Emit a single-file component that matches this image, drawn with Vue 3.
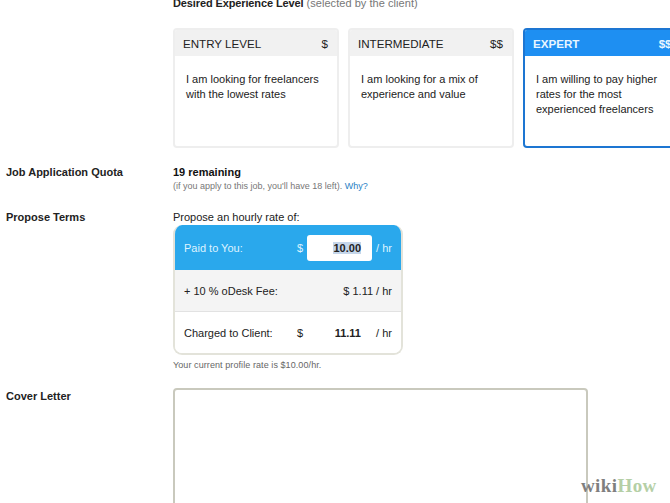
<script setup>
const levels = [
  { title: 'ENTRY LEVEL', price: '$', text: 'I am looking for freelancers with the lowest rates' },
  { title: 'INTERMEDIATE', price: '$$', text: 'I am looking for a mix of experience and value' },
  { title: 'EXPERT', price: '$$$', text: 'I am willing to pay higher rates for the most experienced freelancers', active: true }
]
</script>

<template>
  <div class="page">
    <section class="top">
      <h2 class="desired"><b>Desired Experience Level</b> <span>(selected by the client)</span></h2>
      <div class="cards">
        <article v-for="l in levels" :key="l.title" class="card" :class="{ active: l.active }">
          <header><span>{{ l.title }}</span><span class="price">{{ l.price }}</span></header>
          <p>{{ l.text }}</p>
        </article>
      </div>
    </section>

    <section class="row quota">
      <div class="label">Job Application Quota</div>
      <div>
        <div class="remaining">19 remaining</div>
        <div class="hint">(if you apply to this job, you'll have 18 left). <a>Why?</a></div>
      </div>
    </section>

    <section class="row terms">
      <div class="label">Propose Terms</div>
      <div>
        <div class="propose">Propose an hourly rate of:</div>
        <div class="rate">
          <div class="line paid">
            <span class="name">Paid to You:</span>
            <span class="cur">$</span>
            <span class="input"><mark>10.00</mark></span>
            <span class="hr">/ hr</span>
          </div>
          <div class="line fee">
            <span class="name">+ 10 % oDesk Fee:</span>
            <span class="feeval">$ 1.11 / hr</span>
          </div>
          <div class="line charged">
            <span class="name">Charged to Client:</span>
            <span class="cur">$</span>
            <b class="amount">11.11</b>
            <span class="hr">/ hr</span>
          </div>
        </div>
        <div class="hint profile">Your current profile rate is $10.00/hr.</div>
      </div>
    </section>

    <section class="row cover">
      <div class="label cover-label">Cover Letter</div>
      <div class="letter"></div>
    </section>

    <div class="wm"><span class="wiki">wiki</span><span class="how">How</span></div>
  </div>
</template>

<style>
html, body { margin: 0; background: #fff; overflow: hidden; }
</style>

<style scoped>
.page {
  position: relative;
  width: 670px;
  height: 503px;
  overflow: hidden;
  background: #fff;
  color: #111;
  font-family: "Liberation Sans", Arial, sans-serif;
  font-size: 11px;
}
.top { padding-left: 173px; }
.desired {
  margin: -3px 0 0;
  height: 12px;
  line-height: 12px;
  font-size: 11px;
  font-weight: normal;
  white-space: nowrap;
}
.desired b { color: #222; letter-spacing: -0.12px; }
.desired span { color: #777; letter-spacing: 0.05px; }
.cards { display: flex; gap: 9px; margin-top: 19px; width: 520px; }
.card {
  flex: 0 0 166px;
  box-sizing: border-box;
  height: 120px;
  border: 2px solid #eeeeee;
  border-radius: 4px;
  background: #fff;
  overflow: hidden;
}
.card header {
  display: flex;
  justify-content: space-between;
  align-items: center;
  box-sizing: border-box;
  height: 26px;
  padding: 1px 9px 0 8px;
  background: #f1f1f1;
  font-size: 11.6px;
  color: #222;
}
.card p {
  margin: 0;
  padding: 16px 10px 0 11px;
  line-height: 15px;
  font-size: 11px;
  color: #222;
}
.card.active { border-color: #1d76d2; }
.card.active header { background: #1e8ff2; color: #e8f6ff; font-weight: bold; }
.row { display: flex; padding-left: 6px; }
.label { flex: 0 0 167px; font-weight: bold; color: #222; line-height: 12px; }
.cover-label { padding-top: 2px; }
.quota { margin-top: 18px; }
.remaining { font-weight: bold; line-height: 12px; color: #111; }
.hint { font-size: 9px; line-height: 11px; color: #777; margin-top: 3px; white-space: nowrap; }
.hint a { color: #1f7fc4; }
.terms { margin-top: 19px; }
.propose { font-size: 11px; line-height: 12px; color: #222; }
.rate {
  box-sizing: border-box;
  width: 230px;
  margin-top: 2px;
  border: 2px solid #e3e3da;
  border-top: 0;
  border-radius: 9px;
  overflow: hidden;
}
.line {
  display: flex;
  align-items: center;
  padding: 0 9px;
  font-size: 11px;
  color: #222;
}
.name { flex: 1; }
.paid {
  height: 45px;
  margin: 0 -2px;
  padding: 0 11px;
  background: #2aa8ec;
  color: #def3ff;
}
.cur { width: 10px; }
.input {
  box-sizing: border-box;
  width: 65px;
  height: 26px;
  padding-right: 11px;
  background: #fff;
  border-radius: 3px;
  text-align: right;
  line-height: 26px;
  font-weight: bold;
  color: #222;
}
.input mark { background: #c5d6ea; color: #222; }
.hr { width: 16px; margin-left: 4px; text-align: right; white-space: nowrap; }
.fee { height: 42px; box-sizing: border-box; background: #f4f4f4; border-bottom: 1px solid #e2e2e2; }
.feeval { white-space: nowrap; }
.charged { height: 41px; background: #fff; }
.amount { box-sizing: border-box; width: 65px; padding-right: 11px; text-align: right; }
.profile { margin-top: 5px; color: #666; letter-spacing: 0.08px; }
.cover { margin-top: 17px; }
.letter {
  box-sizing: border-box;
  width: 415px;
  height: 160px;
  border: 2px solid #c9c9bd;
  border-radius: 4px;
  background: #fff;
}
.wm {
  position: absolute;
  left: 581px;
  top: 475px;
  font-family: "Liberation Serif", serif;
  font-weight: bold;
  font-size: 19px;
  line-height: 22px;
  letter-spacing: 0.4px;
}
.wiki { color: #7f7f7f; }
.how { color: #b5cfa6; }
</style>
